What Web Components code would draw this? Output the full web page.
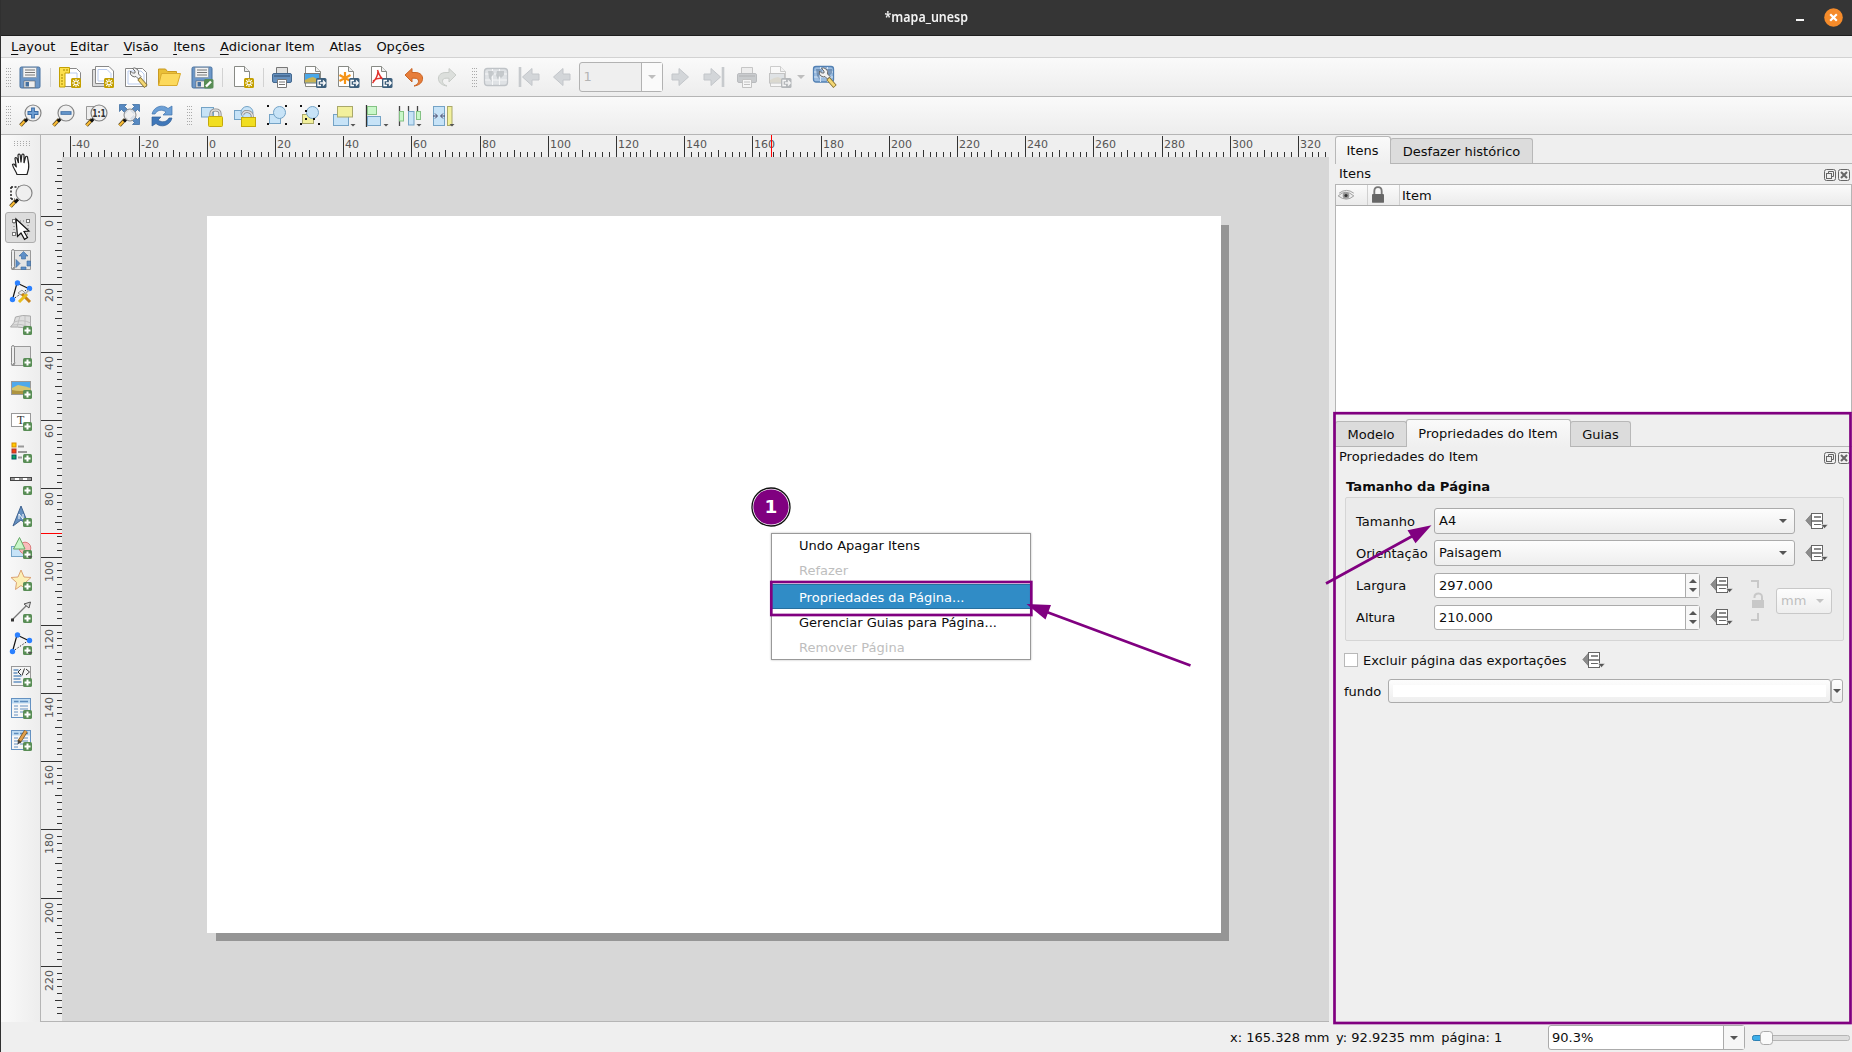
<!DOCTYPE html>
<html lang="pt-BR"><head><meta charset="utf-8"><title>mapa_unesp</title>
<style>
html,body{margin:0;height:100%;overflow:hidden;background:#efefef}
body{font:13.03px "DejaVu Sans",sans-serif;color:#0c0c0c}
</style></head><body><layout-window></layout-window>
<script>
const badge='<rect x="14" y="14" width="9" height="9" rx="1.6" fill="#588d55"/><path d="M18.5 15.5v6M15.5 18.5h6" stroke="#fff" stroke-width="2"/>';
const gold='<rect x="13" y="13" width="10" height="10" rx="1.5" fill="#c4a000"/><path d="M18 14v8M14 18h8M15.2 15.2l5.6 5.6M20.8 15.2l-5.6 5.6" stroke="#fff" stroke-width="1.1"/><circle cx="18" cy="18" r="1.3" fill="#c4a000"/>';
const exp='<rect x="13" y="13" width="10.5" height="10" rx="1.5" fill="#3d5f7c"/><path d="M18 15.5h-3v5h3M17 18h5M20 15.5l2.2 2.5L20 20.5" stroke="#fff" stroke-width="1.3" fill="none"/>';
const page='<path d="M2.5 1.5h10l5 5v15h-15z" fill="#fff" stroke="#888a85"/><path d="M12.5 1.5v5h5" fill="#eee" stroke="#888a85"/>';
const floppy='<rect x="2" y="2" width="20" height="21" rx="1.5" fill="#6c97c8" stroke="#47709f"/><rect x="5" y="2.5" width="13.5" height="10" fill="#f3f3f3" stroke="#7c8b9b" stroke-width=".6"/><path d="M7 5h10M7 7.5h10M7 10h10" stroke="#777"/><rect x="6" y="16" width="11" height="6.5" fill="#eee" stroke="#555" stroke-width=".5"/><rect x="7.5" y="17" width="3.5" height="4.5" fill="#45709f"/>';
const lens='<path d="M2.5 21.5l5.5-6" stroke="#5c4a20" stroke-width="3.6"/><path d="M2.5 21.5l4-4.300" stroke="#fcbd35" stroke-width="2"/><path d="M7 17.500l3-3.300" stroke="#111" stroke-width="3"/>';
const glass='<circle cx="15" cy="9" r="8" fill="#efefef" fill-opacity=".92" stroke="#858585" stroke-width="1.2"/>';
const dn='<path d="M18.500 20h5l-2.500 2.600z" fill="#555"/>';
const printer='<path d="M6.500 2.500h11v8h-11z" fill="#e1e1e1" stroke="#777"/><rect x="2.500" y="8.500" width="19" height="9" rx="1.500" fill="#6690bd" stroke="#43688f"/><path d="M4 11h16" stroke="#3b5c80" stroke-width="1.300"/><path d="M7.500 14.500h9v8h-9z" fill="#fff" stroke="#777"/><path d="M9 17h6M9 19.500h6" stroke="#777"/>';
const map='<g transform="translate(-1 -2)"><rect x="1.500" y="3.500" width="20" height="15.500" rx="2.500" fill="#9bbce0" stroke="#5280b3" stroke-width="1.300"/><path d="M2 9h19M2 14h19M8.500 4v15M15.500 4v15" stroke="#d8e6f5"/><path d="M4 6h5l1 3-3 3 1 5-3-4zM13 6l7 0v4l-3 3-2-2-1 4-2-5z" fill="#5a7ba2" opacity=".65"/></g>';
const wrench='<path d="M8.500 3.500l2.500 2.500v2h-2.500L6.500 6Q5.500 9.500 8 11t4 .5l2.500 2.500 2.500-2.500-2.500-2.500Q15.500 6 13 4t-4.500-.5z" fill="#f3f3f3" stroke="#606060" stroke-width=".9"/><path d="M15 13.500l7 8" stroke="#806a2a" stroke-width="4.400"/><path d="M15.400 14l6.200 7" stroke="#f3d774" stroke-width="2.800"/>';
const arrowR='M3 9h7V3.500l9.500 8.500-9.500 8.500V15H3z';
const roll='<path d="M4 2.500h17.500v19H4z" fill="#e4e4e4" stroke="#9a9a9a"/><path d="M2.500 3.500q0-2 1.500-2t1.500 2v15l-2.500 3q-1-1-.5-3z" fill="#eee" stroke="#888"/><path d="M3 21.500q3 0 3-3" fill="none" stroke="#888"/>';
const nodes='<path d="M3.500 19.500L8 3l11.500 5.500" stroke="#111" fill="none" stroke-width="1.200"/><path d="M3.500 19.500L19.500 8.500" stroke="#333" stroke-dasharray="1.500 1.500"/><g fill="#2b80ff"><circle cx="3.500" cy="19.500" r="2.700"/><circle cx="8.500" cy="3" r="2.700"/><circle cx="20.500" cy="8.500" r="2.700"/></g>';
const table='<rect x="2.500" y="2.500" width="19" height="19" fill="#f7f7f7" stroke="#6491c1"/><rect x="3" y="3" width="18" height="4.500" fill="#bfdcf3"/><path d="M5 5.500h4.500M11 5.500h8" stroke="#5d8cbd" stroke-width="1.500"/><path d="M5 10h4M11 10h8M5 13h4M11 13h8M5 16h4M11 16h8M5 19h4" stroke="#6491c1"/>';
const corners='<g fill="#111"><rect x="1" y="1" width="2" height="2"/><rect x="19" y="1" width="2" height="2"/><rect x="1" y="19" width="2" height="2"/><rect x="19" y="19" width="2" height="2"/></g>';
const bc='fill="#c7e3f7" stroke="#74a3c6"', yc='fill="#f2f09c" stroke="#a9a86a"', gc='fill="#c9f7c9" stroke="#84c284"';
const lock='<path d="M11 13.500v-3.500q0-4 4.500-4t4.500 4v3.500" fill="none" stroke="#8a8a8a" stroke-width="3.200"/><path d="M11 13.500v-3.500q0-4 4.500-4t4.500 4v3.500" fill="none" stroke="#dedede" stroke-width="1.500"/><rect x="8.500" y="12.500" width="14" height="10" rx="1" fill="#f1de20" stroke="#c4a80c"/>';
const I={
save:floppy,
newl:'<path d="M3.500 3.500h15l4 4v14h-19z" fill="#fff" stroke="#888"/><path d="M10 8h9v9" fill="none" stroke="#b9cbed"/><path d="M1.500 2.500h10v5.500h-4.500v14h-5.500z" fill="#fcdf4d" stroke="#c4a000"/><path d="M3 10h2M3 13h2M3 16h2M3 19h2M6 4v2M9 4v2" stroke="#a48500"/>'+gold,
dup:'<path d="M1.500 4.500h17v17h-17z" fill="#ddd" stroke="#888"/><path d="M4.500 1.500h13.500l4.500 4.500v12.500h-18z" fill="#fff" stroke="#888"/><path d="M7 4.500h9l4 4v7.500h-13z" fill="none" stroke="#b9cbed"/>'+gold,
manage:'<path d="M1.500 3.500h17l4 4v14h-21z" fill="#fff" stroke="#888"/><path d="M4 6h13l3 3v10h-16z" fill="none" stroke="#b9cbed"/>'+wrench,
folder:'<path d="M1.500 20V4h7l2 2.500h9v4" fill="#e9bf37" stroke="#c99a22"/><path d="M1.500 20.500l3-12h19l-3.500 12z" fill="#fcd95c" stroke="#d9aa2d"/>',
saveas:floppy+'<rect x="14" y="14" width="9.500" height="9.500" rx="1.600" fill="#588d55"/><path d="M16 21.500l5-5" stroke="#fff" stroke-width="2.400"/>',
page:'<g transform="translate(1 0)">'+page+'</g>'+gold,
print:printer,
img:page+'<rect x="1.500" y="8.500" width="15" height="9.500" fill="#4aa7e8" stroke="#777"/><path d="M2 15l4-2 4-1 6 3v2.500H2z" fill="#c9b353"/>'+exp,
svg:page+'<path d="M9 7v12M3.500 10l11 6M14.500 10l-11 6" stroke="#f59417" stroke-width="2.200"/>'+exp,
pdf:page+'<path d="M8.500 5q2 7 6.500 10M9 6q0 6-5.500 12M4 16q5-4 11-2" stroke="#e1342d" stroke-width="1.500" fill="none"/>'+exp,
undo:'<path d="M3 10L10 3.500v4h3c5.500 0 8 3 7.500 7-.5 3.500-4 6-8.500 6.500 3.500-1.500 4.500-3 4.500-5 0-1.700-1.500-2.800-3.500-2.800h-3V17z" fill="#e77e3b" stroke="#ca6526"/>',
redo:'<path transform="matrix(-1 0 0 1 24 0)" d="M3 10L10 3.500v4h3c5.500 0 8 3 7.500 7-.5 3.500-4 6-8.500 6.500 3.500-1.500 4.500-3 4.500-5 0-1.700-1.500-2.800-3.500-2.800h-3V17z" fill="#dcdfdc" stroke="#c8ccc8"/>',
map:'<rect x=".5" y="3.500" width="23" height="17" rx="3" fill="#dfe2e5" stroke="#bfc3c7" stroke-width="1.300"/><path d="M1 9h22M1 15h22M8.500 4v16M15.500 4v16" stroke="#f5f6f7"/><path d="M4 6h5l1 3-3 3 1 5-3-4zM13 6l7 0v4l-3 3-2-2-1 4-2-5z" fill="#bcc0c3" opacity=".8"/>',
first:'<path d="M3 2v20" stroke="#c7cacd" stroke-width="2.600"/><path transform="matrix(-1 0 0 1 25 0)" d="'+arrowR+'" fill="#d3d6d9" stroke="#c3c6ca"/>',
prev:'<path transform="matrix(-1 0 0 1 23 0)" d="'+arrowR+'" fill="#d3d6d9" stroke="#c3c6ca"/>',
next:'<path d="'+arrowR+'" fill="#d3d6d9" stroke="#c3c6ca"/>',
last:'<path d="M21 2v20" stroke="#c7cacd" stroke-width="2.600"/><path transform="translate(-1 0)" d="'+arrowR+'" fill="#d3d6d9" stroke="#c3c6ca"/>',
gprint:'<g style="filter:grayscale(.85)" opacity=".38">'+printer+'</g>',
gexp:'<g style="filter:grayscale(.75)" opacity=".38">'+page+'<rect x="1.500" y="8.500" width="15" height="9.500" fill="#a8cbe4" stroke="#777"/><path d="M2 15l4-2 4-1 6 3v2.500H2z" fill="#c9b353"/>'+exp+'</g>',
mapset:map+wrench,
zin:lens+glass+'<path d="M15 3.500v11M9.500 9h11" stroke="#3a6ca6" stroke-width="3.800"/><path d="M15 4.500v9M10.500 9h9" stroke="#6f9fd3" stroke-width="1.800"/>',
zout:lens+glass+'<path d="M9.500 9h11" stroke="#3a6ca6" stroke-width="3.600"/><path d="M10.500 9h9" stroke="#6f9fd3" stroke-width="1.600"/>',
z11:'<path d="M2.500 2.500h8v13h-8z" fill="#eee" stroke="#999"/>'+lens+glass+'<text x="8.200" y="12.700" font-size="10.500" font-weight="bold" textLength="13.500" lengthAdjust="spacingAndGlyphs" fill="#333">1:1</text>',
zfull:'<g fill="#5689c2" stroke="#34659b" stroke-width=".7"><path d="M2.500.5h7L7.500 2.500l4 4-3 3-4-4-2 2zM22.500.5v7l-2-2-4 4-3-3 4-4-2-2zM22.500 20.500h-7l2-2-4-4 3-3 4 4 2-2z"/></g>'+lens+'<circle cx="13" cy="11" r="6" fill="#eee" fill-opacity=".85" stroke="#888"/>',
refresh:'<path d="M2 10C4 2 13 0 18 4.500L22 2v9h-9l3-3C12 5 7 6 5 10z" fill="#6b9fd6" stroke="#3f73ae" stroke-width=".7"/><path d="M22 14c-2 8-11 10-16 5.500L2 22v-9h9l-3 3c4 3 9 2 11-2z" fill="#3f77b9" stroke="#315f96" stroke-width=".7"/>',
lock:'<rect x="1.500" y="3.500" width="12" height="9.500" '+bc+'/>'+lock,
unlock:'<rect x="1.500" y="6.500" width="9" height="9" '+bc+'/><circle cx="14" cy="8.500" r="6" '+bc+'/><path d="M9.500 11q1-4 5-3.500 5 .5 5 6" fill="none" stroke="#898989" stroke-width="3"/><path d="M9.500 11q1-4 5-3.500 5 .5 5 6" fill="none" stroke="#ddd" stroke-width="1.500"/><rect x="8.500" y="13.500" width="14" height="9" fill="#f1de20" stroke="#c4a80c"/>',
group:'<rect x="3.500" y="10.500" width="11" height="9" '+bc+'/><circle cx="13.500" cy="8.500" r="6" '+bc+'/>'+corners,
ungroup:'<rect x="3.500" y="10.500" width="11" height="9" '+yc+'/><circle cx="13.500" cy="8.500" r="6" '+bc+'/>'+corners+'<path d="M6 6h2v2H6zM6 14h2v2H6zM14 14h2v2h-2z" fill="#111"/>',
raise:'<rect x="1.500" y="10.500" width="15" height="11" '+bc+'/><rect x="5.500" y="2.500" width="15" height="10.500" '+yc+'/>'+dn,
align:'<path d="M1.500 1v22" stroke="#333" stroke-width="1.300"/><rect x="2.500" y="2.500" width="9" height="8" '+gc+'/><rect x="2.500" y="12.500" width="13" height="9" '+bc+'/>'+dn,
dist:'<path d="M1.500 2v20M10.500 2v5M19.500 2v5" stroke="#444" stroke-width="1.300"/><rect x="1.500" y="7.500" width="4" height="9.500" '+gc+'/><rect x="10.500" y="7.500" width="5.500" height="13.500" '+bc+'/><rect x="18.500" y="7.500" width="4" height="8" '+gc+'/>'+dn,
resize:'<rect x="2.500" y="2.500" width="11" height="19" '+bc+'/><path d="M2 12h4M4 9.500L6.500 12 4 14.500M14 12h-4M12 9.500L9.500 12l2.500 2.500" stroke="#446" fill="none"/><rect x="16.500" y="2.500" width="4.500" height="19" '+yc+'/>'+dn,
hand:'<path d="M8 22.500C7 19 4 16 3.500 12.500q1.500-1.500 3 1.500l.7.500L6 6.500q.5-2 2 0L9.500 11 9 3q1-2 2.200 0l.8 7.500.8-7.500q1.200-2 2.200 0v8l1.500-6q1.300-1.500 2 0C19 9 20.500 13 19.500 17l-1.500 5.500z" fill="#fff" stroke="#222" stroke-width="1.200"/>',
zoom:'<path d="M2 3h8M2 3v12M2 15h4" stroke="#222" stroke-width="1.500" stroke-dasharray="2 1.500" fill="none"/><g transform="translate(-1 1)">'+lens+'</g>'+glass,
select:'<g transform="translate(1 1)"><rect x="4" y="4" width="14" height="13" fill="none" stroke="#777" stroke-dasharray="1 2"/><g fill="#fff" stroke="#777"><rect x="2.500" y="2.500" width="3" height="3"/><rect x="16.500" y="2.500" width="3" height="3"/><rect x="2.500" y="15.500" width="3" height="3"/></g><path d="M6 2l13 12-5 .5 3.500 6-3 1.800-3.500-6.300-3.500 3.500z" fill="#fff" stroke="#111" stroke-width="1.200"/></g>',
move:roll+'<g fill="#5e8fc8" stroke="#3b689b" stroke-width=".6"><path d="M14.500 3.500l4.500 4.500h-2.500v3h-4V8H10zM7 11.500l4 4-4 4zM21.500 13v5h-3.500v-5zM12 21.500v-2.500h5v2.500z"/></g>',
nodeedit:nodes+'<path d="M9 13l4-3 3 3-4 2z" fill="#e9e9e9" stroke="#999"/><path d="M13 14l8 8" stroke="#c78216" stroke-width="3"/><path d="M18 14l-8 8" stroke="#e8bd1e" stroke-width="3"/><path d="M16 14l4-4" stroke="#aaa" stroke-width="1.500"/>',
m3d:'<path d="M1.500 15Q6 11 6.500 5q7-2.500 15-1v14.500q-5-4-20-3.500z" fill="#dedede" stroke="#aaa"/><path d="M5 10q9-3 16.500 1M11 4l-3 11M16 4v12M3 13q9-2 18 2" stroke="#c0c0c0" fill="none"/>'+badge,
addmap:roll+badge,
pic:'<rect x="2.500" y="5.500" width="19" height="13" fill="#4fa9ec" stroke="#999"/><path d="M3 12l6-3q6 1 12.500 3v6H3z" fill="#d6c56f"/><path d="M3 14q8 2 18 0v4H3z" fill="#ae9440"/>'+badge,
label:'<rect x="2.500" y="5.500" width="19" height="13" fill="#fff" stroke="#999"/><text x="8" y="16" font-size="12" font-family="Liberation Serif,serif" fill="#333">T</text>'+badge,
legend:'<g stroke-width="1"><rect x="3" y="3" width="4" height="4" fill="#fc0" stroke="#d98b00"/><rect x="3" y="9" width="4" height="4" fill="#f4420e" stroke="#a33"/><rect x="3" y="15" width="4" height="4" fill="#0ba55c" stroke="#056"/></g><path d="M9 6.500h6M9 12h9M9 17.500h4" stroke="#999" stroke-width="1.800"/>'+badge,
scale:'<rect x="1.500" y="5.500" width="21" height="3" fill="#fff" stroke="#444"/><path d="M2 7h4M10 7h4M18 7h4" stroke="#999" stroke-width="2"/>'+badge,
north:'<path d="M12 2L4 22l8-6 8 6z" fill="#6690bf" stroke="#3e6290"/><path d="M10 15v-5l4 5v-5" stroke="#fff" fill="none"/>'+badge,
shape:'<rect x="2.500" y="10.500" width="13" height="10" '+bc+'/><circle cx="16" cy="12" r="5.800" fill="#f9bcbc" stroke="#db7c7c"/><path d="M10.500 1.500L16 13H4.500z" fill="#c9f7c9" stroke="#65a765"/>'+badge+dn,
star:'<path d="M12 2l3 7 7 .5-5.500 5 1.500 7-6-4-5.500 4 1-7-5.500-5 7-.5z" fill="#fcefb5" stroke="#dba273"/>'+badge,
arrow:'<path d="M3 20L20 3" stroke="#777" stroke-width="1.300"/><path d="M21.500 2l-1.500 6-5-4z" fill="#ddd" stroke="#555"/><rect x="2" y="18.500" width="3" height="3" fill="#333"/>'+badge,
node:nodes+badge+dn,
html:'<rect x="2.500" y="2.500" width="19" height="19" fill="#f5f5f5" stroke="#999"/><path d="M4.500 6h5M4.500 9h4M4.500 12h8M4.500 15h7M4.500 18h8" stroke="#6491c1" stroke-width="1.600"/><path d="M12 5l-3 3 3 3M17 5l3.500 3-3.500 3M15.500 4.500l-2.500 7" stroke="#333" fill="none"/>'+badge,
table:table+badge,
tedit:table+'<path d="M17 3L10 14" stroke="#704f1e" stroke-width="4"/><path d="M17 3L11 12.500" stroke="#e0a04c" stroke-width="2.500"/><path d="M8.500 16.500l.5-4 3 2z" fill="#444"/>'+badge,
ovr:'<path d="M.8 11.500L7.500 4v15z" fill="#8c8c8c" stroke="#666" stroke-width=".6"/><rect x="6.500" y="4.500" width="11" height="15" fill="#fff" stroke="#666"/><path d="M6.500 12h11M9 8h7" stroke="#666" stroke-width="1.300"/><path d="M9 15.500h7" stroke="#666"/><path d="M16 15.500h7l-3.500 4z" fill="#555" stroke="#efefef" stroke-width=".6"/>',
eye:'<g transform="translate(.5 1)"><path d="M3 12q8-8 17 0-8 7-17 0zM4 9q8-6 16 0" fill="#eee" stroke="#999"/><circle cx="11.500" cy="11.500" r="3.600" fill="#999"/><circle cx="11.500" cy="11.500" r="1.700" fill="#333"/></g>',
pad:'<path d="M8 12V8q0-4.500 4-4.500t4 4.500v4" fill="none" stroke="#777" stroke-width="2"/><rect x="5.500" y="11" width="13" height="9.500" rx="1" fill="#666"/>'
};
function def(name,css,html){customElements.define(name,class extends HTMLElement{connectedCallback(){if(this.shadowRoot)return;const r=this.attachShadow({mode:'open'});r.innerHTML='<style>'+css+'</style>'+(typeof html==='function'?html(this):html)}})}
def('ui-icon',':host{display:flex;flex:none;width:24px;height:24px}svg{display:block;width:24px;height:24px;overflow:visible}',e=>`<svg viewBox="0 0 24 24">${I[e.getAttribute('name')]}</svg>`);
def('tool-button',':host{display:flex;flex:none;width:33px;height:31px;align-items:center;justify-content:center;box-sizing:border-box}:host([checked]){width:31px;background:#dcdcdc;border:1px solid #adadad;border-radius:3px}',e=>`<ui-icon name="${e.getAttribute('name')}"></ui-icon>`);
def('tool-grip',':host{display:block;flex:none;width:5px;height:19px;background:radial-gradient(circle at .5px .5px,#aaa .7px,transparent .9px) 0 0/2px 3px}:host([h]){width:17px;height:5px;background-size:3px 2px}','');
def('tool-sep',':host{display:block;flex:none;width:1px;height:19px;background:#d2d2d2}','');
def('title-bar',':host{display:grid;grid-template-columns:1fr auto 1fr;align-items:center;height:36px;background:#353535;border-bottom:1px solid #1e1e1e;box-sizing:border-box}.t{grid-column:2;font:600 15px "Noto Sans",sans-serif;color:#f3f3f3;width:84px;display:flex;justify-content:center;white-space:nowrap;margin-top:-3px}.t span{transform:scaleX(.83)}.w{display:flex;justify-content:end;align-items:center;gap:20px;padding-right:9px;margin-top:-1px}.m{width:8px;height:2px;background:#f5f5f5;margin-top:6px}svg{display:block}','<div class="t"><span>*mapa_unesp</span></div><div class="w"><i class="m"></i><svg width="19" height="19"><circle cx="9.500" cy="9.500" r="9.300" fill="#f58b2a"/><path d="M6.200 6.200l6.600 6.600M12.800 6.200l-6.600 6.600" stroke="#fff" stroke-width="2.200"/></svg></div>');
def('menu-bar',':host{display:flex;height:22px;box-sizing:border-box;border-bottom:1px solid #d2d2d2;background:#efefef;gap:14.800px;padding-left:10px;line-height:22px}u{text-underline-offset:3px;text-decoration-thickness:1px}span{white-space:nowrap}','<span><u>L</u>ayout</span><span><u>E</u>ditar</span><span><u>V</u>isão</span><span><u>I</u>tens</span><span><u>A</u>dicionar Item</span><span>Atlas</span><span>Opções</span>');
const tb=':host{display:flex;align-items:center;box-sizing:border-box;background:linear-gradient(#fafafa,#ededed);border-bottom:1px solid #b5b5b5;padding-left:5px}tool-grip{margin-right:2.500px}';
const B=s=>s.split(' ').map(n=>`<tool-button name="${n}"></tool-button>`).join('');
def('main-toolbar',tb+':host{height:39px}.s{margin:0 3px}.page{display:flex;flex:none;width:84px;height:30px;box-sizing:border-box;border:1px solid #b2b2b2;border-radius:3px;color:#b4b4b4;background:#efefef;align-items:center;margin-right:1.500px}.page b{font-weight:400;flex:1;padding-left:4px;line-height:28px;border-right:1px solid #b2b2b2}.page i{width:20px;height:28px;display:flex;align-items:center;justify-content:center;background:#fafafa}.tri{border:4px solid transparent;border-top-color:#bebebe;border-bottom:0}',
'<tool-grip></tool-grip>'+B('save')+'<tool-sep class="s"></tool-sep>'+B('newl dup manage folder saveas')+'<tool-sep class="s" style="margin-right:4px"></tool-sep>'+B('page')+'<tool-sep class="s" style="margin-right:2px"></tool-sep>'+B('print img svg pdf undo redo')+'<tool-grip style="margin:0 3px 0 8px"></tool-grip>'+B('map first prev')+'<span class="page"><b>1</b><i><span class="tri"></span></i></span>'+B('next last gprint gexp')+'<span class="tri" style="margin:0 3px 0 1px"></span>'+B('mapset'));
def('view-toolbar',tb+':host{height:38px}','<tool-grip></tool-grip>'+B('zin zout z11 zfull refresh')+'<tool-grip style="margin:0 4px 0 8px"></tool-grip>'+B('lock unlock group ungroup raise align dist resize'));
def('side-toolbar',':host{display:flex;flex-direction:column;align-items:center;width:40px;box-sizing:border-box;border-right:1px solid #b5b5b5;background:linear-gradient(90deg,#fafafa,#ededed);padding:6px 0 0 0;gap:1px}tool-grip{margin-bottom:1px;margin-left:4px}',
'<tool-grip h></tool-grip>'+B('hand zoom')+'<tool-button name="select" checked></tool-button>'+B('move nodeedit m3d addmap pic label legend scale north shape star arrow node html table tedit'));
const S=3.41;
def('ruler-top',':host{display:block;height:22px}svg{display:block}text{font:11px "DejaVu Sans";fill:#555}',()=>{let s='';const ox=41;for(let m=-42;m<=328;m+=2){const x=Math.floor(207.2+m*S)-ox;const h=m%20==0?21:m%10==0?7:5;s+=`<rect x="${x}" y="${22-h}" width="1" height="${h}" fill="#333"/>`;if(m%20==0)s+=`<text x="${x+2}" y="13">${m}</text>`}
return `<svg width="1288" height="22">${s}<rect x="${771-ox}" y="0" width="1" height="22" fill="#f00"/></svg>`});
def('ruler-left',':host{display:block;width:21px}svg{display:block}text{font:11px "DejaVu Sans";fill:#555}',()=>{let s='';const oy=157;for(let m=-16;m<=234;m+=2){const y=Math.floor(216.05+m*S)-oy;const w=m%20==0?21:m%10==0?7:5;s+=`<rect x="${21-w}" y="${y}" width="${w}" height="1" fill="#333"/>`;if(m%20==0)s+=`<text text-anchor="end" transform="translate(12 ${y+4}) rotate(-90)">${m}</text>`}
return `<svg width="21" height="864">${s}<rect x="0" y="${533-oy}" width="21" height="1" fill="#f00"/></svg>`});
def('paper-page',':host{display:block;width:1014px;height:717px;background:#fff;box-shadow:8.500px 8.500px 0 -.500px #959595}','');
def('context-menu',':host{position:absolute;left:771px;top:533px;width:260px;height:127px;box-sizing:border-box;background:#fff;border:1px solid #999;box-shadow:0 0 2px #bbb;display:flex;flex-direction:column}p{margin:0;height:25px;line-height:24px;padding-left:27px;white-space:nowrap}p.d{color:#bebebe}p.s{margin-top:1px;color:#fff;background:#308cc6;border-top:1px solid #276f9e;border-bottom:1px solid #276f9e;box-sizing:border-box;height:25px;line-height:25px}p.s+p{line-height:27px}p.s+p+p{line-height:27px}','<p>Undo Apagar Itens</p><p class="d">Refazer</p><p class="s">Propriedades da Página...</p><p>Gerenciar Guias para Página...</p><p class="d">Remover Página</p>');
def('layout-canvas',':host{display:flex;flex-direction:column;width:1288px;box-sizing:border-box;border-bottom:1px solid #b5b5b5}.r{display:flex;flex:1;min-height:0}.c{flex:1;background:#d7d7d7;padding:59px 0 0 145px}','<ruler-top></ruler-top><div class="r"><ruler-left></ruler-left><div class="c"><paper-page></paper-page></div></div>');
def('tab-strip',':host{display:flex;height:28px;align-items:flex-end;box-sizing:border-box;border-bottom:1px solid #b5b5b5}',"<slot></slot>");
def('tab-item',':host{display:flex;flex:none;box-sizing:border-box;height:25px;border:1px solid #b8b8b8;border-bottom:0;background:#dcdcdc;border-radius:3px 3px 0 0;align-items:center;justify-content:center;white-space:nowrap;margin-left:-1px;padding-top:1px}:host(:first-child){margin-left:0}:host([on]){height:28px;background:linear-gradient(#fafafa,#efefef);margin-bottom:-1px;z-index:1;padding:0 1px 1px 0}',"<slot></slot>");
def('dock-title',':host{display:flex;height:20px;line-height:22px;padding:0 2px 0 4px;align-items:center;gap:2px}span{flex:1}svg{display:block;margin-top:1px}','<span><slot></slot></span><svg width="12" height="12" fill="none" stroke="#666"><rect x=".5" y=".5" width="11" height="11" rx="2"/><path d="M4.500 4.500v-2h5v5h-2"/><rect x="2.500" y="4.500" width="5" height="5"/></svg><svg width="12" height="12" fill="none" stroke="#666"><rect x=".5" y=".5" width="11" height="11" rx="2"/><path d="M3 3l6 6M9 3L3 9" stroke-width="2"/></svg>');
def('item-tree',':host{display:flex;flex-direction:column;height:229px;box-sizing:border-box;border:1px solid #b5b5b5;border-bottom:0;background:#fff}.h{display:flex;height:20px;border-bottom:1px solid #ababab;background:linear-gradient(#fbfbfb,#ebebeb);line-height:22px}.h span{box-sizing:border-box;width:32px;border-right:1px solid #d0d0d0;display:flex;align-items:center;justify-content:center;padding-right:11px}ui-icon{transform:scale(.92)}.h b{font-weight:400;padding-left:2px}','<div class="h"><span><ui-icon name="eye"></ui-icon></span><span><ui-icon name="pad"></ui-icon></span><b>Item</b></div>');
def('combo-box',':host{display:flex;box-sizing:border-box;height:26px;border:1px solid #ababab;border-radius:3px;background:linear-gradient(#fdfdfd,#eee);align-items:center;padding:0 7px 0 4px;line-height:23px}:host([disabled]){color:#bebebe;border-color:#c8c8c8}span{flex:1;margin-top:-1px}i{border:4px solid transparent;border-top-color:#555;border-bottom:0}:host([disabled]) i{border-top-color:#c4c4c4}','<span><slot></slot></span><i></i>');
def('spin-box',':host{display:flex;box-sizing:border-box;width:269px;height:25px;border:1px solid #ababab;border-radius:3px;background:#fff;line-height:23px}span{flex:1;padding-left:4px}div{width:13px;border-left:1px solid #ababab;background:#f7f7f7;display:flex;flex-direction:column;align-items:center;justify-content:center;gap:5px}i{border:4px solid transparent}.u{border-bottom-color:#555;border-top:0}.d{border-top-color:#555;border-bottom:0}','<span><slot></slot></span><div><i class="u"></i><i class="d"></i></div>');
def('size-group',':host{display:grid;grid-template-columns:78px 1fr;grid-template-rows:repeat(4,32px);align-content:start;box-sizing:border-box;margin:0 8px 0 10px;height:144px;border:1px solid #d5d5d5;border-radius:2px;background:#ebebeb;padding:10px 11px 0 10px;align-items:start}label{line-height:27px;white-space:nowrap}.row{display:flex;height:32px;align-items:flex-start}.row combo-box{width:361px}.row ui-icon{margin:1px 0 0 9.500px}.two .row ui-icon{margin:0 0 0 10px}.two{display:grid;grid-template-columns:300px 30px 56px;align-items:start;grid-column:2;padding-top:1px;grid-row:3/5}.lk{display:flex;flex-direction:column;align-items:center;padding-top:6px;margin-left:17px;width:14px}.lk svg{display:block}.two combo-box{margin:15px 0 0 12px;width:56px}',
'<label>Tamanho</label><div class="row"><combo-box>A4</combo-box><ui-icon name="ovr"></ui-icon></div><label>Orientação</label><div class="row"><combo-box>Paisagem</combo-box><ui-icon name="ovr"></ui-icon></div><label style="grid-row:3">Largura</label><label style="grid-row:4">Altura</label><div class="two"><div><div class="row"><spin-box>297.000</spin-box><ui-icon name="ovr"></ui-icon></div><div class="row"><spin-box>210.000</spin-box><ui-icon name="ovr"></ui-icon></div></div><div class="lk"><svg width="14" height="42" fill="none" stroke="#c8c8c8" stroke-width="2"><path d="M0 2h7v7M3.500 19v-1q0-3.500 4-3.500t3.500 5v3M0 41h7v-7"/><rect x="1" y="21" width="12" height="8" fill="#c8c8c8" stroke="none"/></svg></div><combo-box disabled>mm</combo-box></div>');
def('page-properties',':host{display:block}h3{font-size:13.150px;margin:10px 0 1px 11px;line-height:19px}.x{display:flex;align-items:center;height:26px;margin:6px 0 0 9px}.x i{width:12px;height:12px;border:1px solid #b8b8b8;background:#fff;margin:0 5px 0 0}.x ui-icon{margin:0 0 0 15px}.f{display:flex;align-items:center;margin:6px 8px 0 9px;height:24px}.f span{width:44px}.f div{box-sizing:border-box;height:24px;border:1px solid #ababab;border-radius:3px;background:linear-gradient(#fdfdfd,#eee);display:flex;align-items:center;justify-content:center}.f .a{width:443px;padding:5px 4px}.a b{flex:1;height:12px;background:#fff}.f .c{width:12px}.c b{border:4px solid transparent;border-top-color:#555;border-bottom:0}',
'<h3>Tamanho da Página</h3><size-group></size-group><div class="x"><i></i>Excluir página das exportações<ui-icon name="ovr"></ui-icon></div><div class="f"><span>fundo</span><div class="a"><b></b></div><div class="c"><b></b></div></div>');
def('dock-area',':host{display:flex;flex-direction:column;width:517px;padding-left:6px;padding-top:1px;box-sizing:border-box;flex:1}.b{margin-top:6px}','<tab-strip><tab-item on style="width:56px">Itens</tab-item><tab-item style="width:143px">Desfazer histórico</tab-item></tab-strip><dock-title>Itens</dock-title><item-tree></item-tree><tab-strip class="b"><tab-item style="width:72px">Modelo</tab-item><tab-item on style="width:165px">Propriedades do Item</tab-item><tab-item style="width:61px">Guias</tab-item></tab-strip><dock-title>Propriedades do Item</dock-title><page-properties></page-properties>');
def('status-bar',':host{display:flex;height:30px;align-items:center;justify-content:flex-end;box-sizing:border-box;padding:1px 2px 0 0}.t{display:flex;gap:6.500px;white-space:nowrap;width:318px}.z{display:flex;box-sizing:border-box;width:197px;height:25px;border:1px solid #ababab;border-radius:3px;background:#fff;line-height:23px}.z span{flex:1;padding-left:3px}.z div{width:20px;border-left:1px solid #ababab;display:flex;align-items:center;justify-content:center;background:#f6f6f6}.z i{border:4px solid transparent;border-top-color:#555;border-bottom:0}svg{display:block;margin-left:7px}','<div class="t"><span>x: 165.328 mm</span><span>y: 92.9235 mm</span><span>página: 1</span></div><div class="z"><span>90.3%</span><div><i></i></div></div><svg width="98" height="16"><rect x=".5" y="5.500" width="97" height="5" rx="2" fill="#ddd" stroke="#b5b5b5"/><rect x=".5" y="5.500" width="12" height="5" rx="2" fill="#3daee9" stroke="#2c81b5"/><rect x="8.500" y="1.500" width="12" height="13" rx="3" fill="#fafafa" stroke="#aaa"/></svg>');
def('tutorial-marks',':host{position:absolute;inset:0;pointer-events:none}svg{display:block}text{font:bold 18.500px "DejaVu Sans";fill:#fff}','<svg width="1852" height="1052"><g fill="none" stroke="#800080" stroke-width="2.700"><rect x="771.300" y="582" width="260" height="33"/><rect x="1334.500" y="413.200" width="516" height="609.800"/><path d="M1190.500 665.500L1040 609.500M1326 583.500L1418 533"/></g><g fill="#800080"><path d="M1026.500 604l24.500 1-5.500 14.500zM1431.500 525.300l-16 18-8-13z"/></g><circle cx="771" cy="507" r="19" fill="#fff" stroke="#111" stroke-width="1.300"/><circle cx="771" cy="507" r="17.600" fill="#800080"/><text x="771" y="513.200" text-anchor="middle">1</text></svg>');
def('layout-window',':host{display:flex;flex-direction:column;width:1852px;height:1052px;box-sizing:border-box;border-left:1px solid #303030;background:#efefef;position:relative}.m{display:flex;height:887px}context-menu{left:770px}tutorial-marks{left:-1px}','<title-bar></title-bar><menu-bar></menu-bar><main-toolbar></main-toolbar><view-toolbar></view-toolbar><div class="m"><side-toolbar></side-toolbar><layout-canvas></layout-canvas><dock-area></dock-area></div><status-bar></status-bar><context-menu></context-menu><tutorial-marks></tutorial-marks>');
</script></body></html>
